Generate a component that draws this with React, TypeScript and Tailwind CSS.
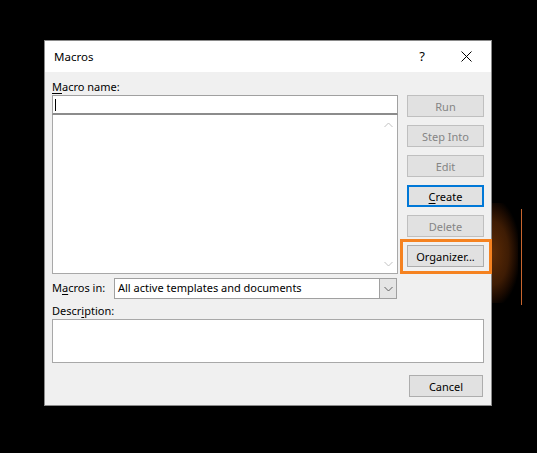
import React from "react";

const font = "font-['Segoe_UI','Noto_Sans',sans-serif]";

function Btn({
  children,
  disabled,
  primary,
}: {
  children: React.ReactNode;
  disabled?: boolean;
  primary?: boolean;
}) {
  return (
    <div
      className={
        "h-[22px] w-full flex items-center justify-center bg-[#e1e1e1] text-[11px] leading-none " +
        (primary
          ? "border-2 border-[#0078d7] text-black"
          : disabled
          ? "border border-[#bfbfbf] text-[#858585]"
          : "border border-[#adadad] text-black")
      }
    >
      {children}
    </div>
  );
}

function Chevron({ up, color }: { up?: boolean; color: string }) {
  return (
    <svg width="9" height="6" viewBox="0 0 9 6">
      <path
        d={up ? "M0.5 5 L4.5 1 L8.5 5" : "M0.5 1 L4.5 5 L8.5 1"}
        fill="none"
        stroke={color}
        strokeWidth="1"
      />
    </svg>
  );
}

export default function App() {
  return (
    <div className={"relative w-[537px] h-[453px] bg-black overflow-hidden pt-[40px] pl-[44px] " + font}>
      {/* warm glow to the right of the dialog */}
      <div className="absolute left-[492px] top-[203px] w-[26px] h-[100px] bg-[radial-gradient(ellipse_at_left,#5e2c06_0%,#3e1c04_45%,#1a0a01_65%,transparent_78%)]" />
      <div className="absolute left-[521px] top-[209px] w-px h-[96px] bg-[#c8652e]" />

      <div className="relative w-[448px] h-[366px] border border-[#8a8a8a] bg-[#f0f0f0] flex flex-col text-black">
        {/* title bar */}
        <div className="h-[31px] bg-white flex items-center pl-[9px] pr-[19px] text-[11.5px]">
          <span>Macros</span>
          <span className="ml-auto mr-[36px] text-[13px]">?</span>
          <svg width="11" height="11" viewBox="0 0 11 11">
            <path d="M0.5 0.5 L10.5 10.5 M10.5 0.5 L0.5 10.5" stroke="#000" strokeWidth="1" />
          </svg>
        </div>

        {/* body */}
        <div className="flex-1 flex flex-col px-[7px] pt-[7px] text-[11px]">
          <div className="flex gap-[9px]">
            <div className="flex-1 flex flex-col">
              <div className="h-[16px] leading-[16px]">
                <span className="underline underline-offset-2">M</span>acro name:
              </div>
              <div className="h-[20px] bg-white border border-[#a0a0a0] border-b-2 border-b-[#8c8c8c] flex items-center pl-[2px]">
                <div className="w-px h-[12px] bg-black" />
              </div>
              <div className="h-[159px] bg-white border border-[#a8a8a8] border-t-0 flex justify-end">
                <div className="w-[17px] flex flex-col items-center justify-between pt-[7px] pb-[6px]">
                  <Chevron up color="#c2c2c2" />
                  <Chevron color="#c2c2c2" />
                </div>
              </div>
            </div>
            <div className="w-[77px] pt-[16px] flex flex-col gap-[8px]">
              <Btn disabled>Run</Btn>
              <Btn disabled>Step Into</Btn>
              <Btn disabled>Edit</Btn>
              <Btn primary>
                <span>
                  <span className="underline underline-offset-2">C</span>reate
                </span>
              </Btn>
              <Btn disabled>Delete</Btn>
              <div className="relative">
                <Btn>
                  <span>
                    Or<span className="underline underline-offset-2">g</span>anizer...
                  </span>
                </Btn>
                <div className="absolute -left-[7px] -right-[8px] -top-[6px] -bottom-[7px] border-[3px] border-[#f58220]" />
              </div>
            </div>
          </div>

          <div className="mt-[4px] h-[21px] flex items-center">
            <div className="w-[62px]">
              M<span className="underline underline-offset-2">a</span>cros in:
            </div>
            <div className="w-[283px] h-[21px] bg-white border border-[#a0a0a0] flex items-center">
              <span className="pl-[3px]">All active templates and documents</span>
              <div className="ml-auto h-full w-[17px] bg-[#e5e5e5] border-l border-[#a0a0a0] flex items-center justify-center">
                <Chevron color="#606060" />
              </div>
            </div>
          </div>

          <div className="mt-[4px] h-[16px] leading-[16px]">
            Descr<span className="underline underline-offset-2">i</span>ption:
          </div>
          <div className="h-[44px] bg-white border border-[#a8a8a8]" />

          <div className="mt-[12px] self-end mr-[1px] w-[74px]">
            <Btn>Cancel</Btn>
          </div>
        </div>
      </div>
    </div>
  );
}
